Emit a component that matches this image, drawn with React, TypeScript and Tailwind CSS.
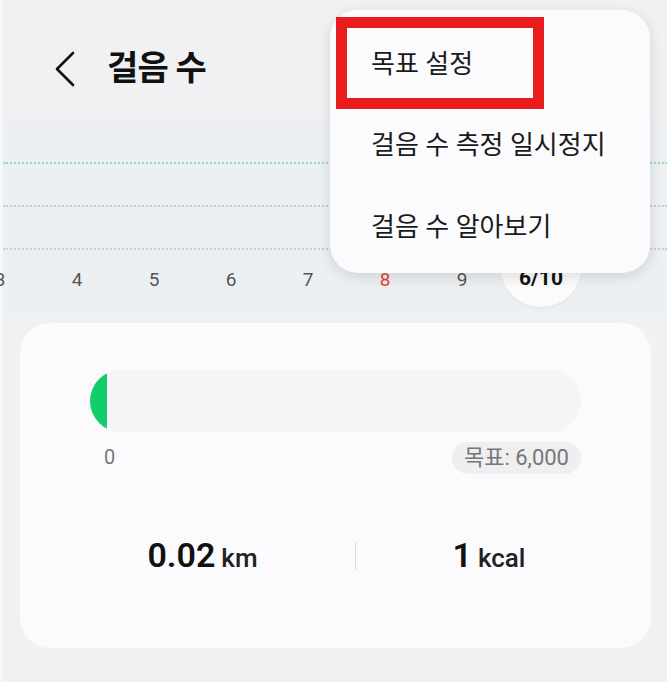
const font = { fontFamily: 'Roboto, "Noto Sans CJK KR", sans-serif' }

const days = ['3', '4', '5', '6', '7', '8', '9']

export default function App() {
  return (
    <div className="relative w-[667px] h-[682px] overflow-hidden bg-[#f1f2f4] text-[#111]" style={font}>
      <div className="flex h-full">
        <div className="w-[3px] bg-[#f7f7f9] shrink-0" />
        <div className="flex-1 flex flex-col">
          {/* header */}
          <div className="h-[120px] flex items-center pl-[50px] pt-[17px] bg-[#f1f1f3]">
            <svg width="24" height="36" viewBox="0 0 24 36" fill="none">
              <polyline points="20,2 4,18 20,34" stroke="#111" strokeWidth="2.6" strokeLinecap="round" strokeLinejoin="round" />
            </svg>
            <h1 className="ml-[30px] text-[34px] font-bold tracking-tight">걸음 수</h1>
          </div>

          {/* chart */}
          <div className="bg-[#edf0f3] h-[199px] flex flex-col">
            <div className="mt-[42px] border-t-2 border-dotted border-[#7fd8b0] opacity-80" />
            <div className="mt-[41px] border-t-2 border-dotted border-[#c9ccd1]" />
            <div className="mt-[41px] border-t-2 border-dotted border-[#c9ccd1]" />
            <div className="relative h-[60px] mt-[-12px]">
              {days.map((d, i) => (
                <span key={d}
                  className={`absolute top-[28px] w-[30px] text-center text-[19px] ${d === '8' ? 'text-[#e0443a]' : 'text-[#555]'}`}
                  style={{ left: -18 + i * 77 }}>{d}</span>
              ))}
              <div className="absolute left-[497px] top-[-13px] w-[82px] h-[82px] rounded-full bg-[#fbfbfc] shadow-[0_1px_3px_rgba(0,0,0,0.06)] flex items-start justify-center pt-[38px]">
                <span className="text-[21px] font-bold leading-[30px]">6/10</span>
              </div>
            </div>
          </div>

          {/* card */}
          <div className="flex-1 bg-[#f0f1f3] pr-[16px] pl-[17px] pt-[4px]">
            <div className="h-[325px] rounded-[30px] bg-[#fbfbfd] px-[70px] pt-[47px] flex flex-col">
              <div className="h-[62px] rounded-full bg-[#f5f5f7] overflow-hidden flex">
                <div className="w-[17px] h-full bg-[#13cc6b] rounded-l-full" />
              </div>
              <div className="flex items-start justify-between mt-[10px]">
                <span className="ml-[14px] text-[20px] text-[#777]">0</span>
                <span className="px-[12px] h-[32px] leading-[32px] rounded-full bg-[#efeff1] text-[22px] text-[#777]">목표: 6,000</span>
              </div>
              <div className="flex items-center mt-[56px] -mx-[70px]">
                <div className="w-[335px] flex items-baseline justify-center pl-[30px]">
                  <span className="text-[34px] font-semibold">0.02</span>
                  <span className="ml-[6px] text-[26px] font-medium text-[#222]">km</span>
                </div>
                <div className="w-px h-[28px] bg-[#dcdcdf]" />
                <div className="flex-1 flex items-baseline justify-center pr-[29px]">
                  <span className="text-[34px] font-semibold">1</span>
                  <span className="ml-[6px] text-[26px] font-medium text-[#222]">kcal</span>
                </div>
              </div>
            </div>
          </div>
        </div>
      </div>

      {/* overflow menu */}
      <div className="absolute left-[330px] top-[10px] w-[320px] h-[263px] rounded-[28px] bg-[#fbfbfd] shadow-[0_4px_14px_rgba(0,0,0,0.12)] flex flex-col pl-[41px] pt-[34px] text-[26px] text-[#1a1a1a]">
        <div className="h-[40px] leading-[40px]">목표 설정</div>
        <div className="h-[40px] leading-[40px] mt-[41px]">걸음 수 측정 일시정지</div>
        <div className="h-[40px] leading-[40px] mt-[42px]">걸음 수 알아보기</div>
      </div>
      <div className="absolute left-[336px] top-[17px] w-[208px] h-[92px] border-[11px] border-[#e81c1c]" />
    </div>
  )
}
